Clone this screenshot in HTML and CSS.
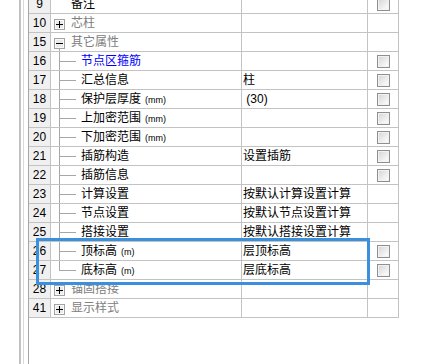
FILE: index.html
```html
<!DOCTYPE html>
<html lang="zh-CN">
<head>
    <meta charset="UTF-8">
    <title>属性</title>
    <link rel="stylesheet" href="styles.css">
</head>
<body>
    <div class="frame">
        <div class="strip"><div class="strip-lines"></div></div>

        <div class="grid">
            <!-- 顶层 -->
            <div class="row">
                <div class="num">9</div>
                <div class="name top"><span class="label">备注</span></div>
                <div class="val"></div>
                <div class="chk"><span class="box"></span></div>
            </div>
            <div class="row">
                <div class="num">10</div>
                <div class="name"><span class="node"><svg width="11" height="11" viewBox="0 0 11 11"><rect x="0.5" y="0.5" width="10" height="10" fill="#ebebeb" stroke="#a3a3a3"/><rect x="1.5" y="1.5" width="8" height="8" fill="none" stroke="#fafafa"/><path d="M2 5.5h7M5.5 2v7" stroke="#000"/></svg></span><span class="label group">芯柱</span></div>
                <div class="val"></div>
                <div class="chk"></div>
            </div>
            <div class="row">
                <div class="num">15</div>
                <div class="name"><span class="node open"><svg width="11" height="11" viewBox="0 0 11 11"><rect x="0.5" y="0.5" width="10" height="10" fill="#ebebeb" stroke="#a3a3a3"/><rect x="1.5" y="1.5" width="8" height="8" fill="none" stroke="#fafafa"/><path d="M2 5.5h7" stroke="#000"/></svg></span><span class="label group">其它属性</span></div>
                <div class="val"></div>
                <div class="chk"></div>
            </div>

            <!-- 其它属性 子项 -->
            <div class="row">
                <div class="num">16</div>
                <div class="name"><span class="twig"></span><span class="label blue">节点区箍筋</span></div>
                <div class="val"></div>
                <div class="chk"><span class="box"></span></div>
            </div>
            <div class="row">
                <div class="num">17</div>
                <div class="name"><span class="twig"></span><span class="label">汇总信息</span></div>
                <div class="val">柱</div>
                <div class="chk"><span class="box"></span></div>
            </div>
            <div class="row">
                <div class="num">18</div>
                <div class="name"><span class="twig"></span><span class="label">保护层厚度<span class="unit">(mm)</span></span></div>
                <div class="val">&nbsp;(30)</div>
                <div class="chk"><span class="box"></span></div>
            </div>
            <div class="row">
                <div class="num">19</div>
                <div class="name"><span class="twig"></span><span class="label">上加密范围<span class="unit">(mm)</span></span></div>
                <div class="val"></div>
                <div class="chk"><span class="box"></span></div>
            </div>
            <div class="row">
                <div class="num">20</div>
                <div class="name"><span class="twig"></span><span class="label">下加密范围<span class="unit">(mm)</span></span></div>
                <div class="val"></div>
                <div class="chk"><span class="box"></span></div>
            </div>
            <div class="row">
                <div class="num">21</div>
                <div class="name"><span class="twig"></span><span class="label">插筋构造</span></div>
                <div class="val">设置插筋</div>
                <div class="chk"><span class="box"></span></div>
            </div>
            <div class="row">
                <div class="num">22</div>
                <div class="name"><span class="twig"></span><span class="label">插筋信息</span></div>
                <div class="val"></div>
                <div class="chk"><span class="box"></span></div>
            </div>
            <div class="row">
                <div class="num">23</div>
                <div class="name"><span class="twig"></span><span class="label">计算设置</span></div>
                <div class="val">按默认计算设置计算</div>
                <div class="chk"></div>
            </div>
            <div class="row">
                <div class="num">24</div>
                <div class="name"><span class="twig"></span><span class="label">节点设置</span></div>
                <div class="val">按默认节点设置计算</div>
                <div class="chk"></div>
            </div>
            <div class="row">
                <div class="num">25</div>
                <div class="name"><span class="twig"></span><span class="label">搭接设置</span></div>
                <div class="val">按默认搭接设置计算</div>
                <div class="chk"></div>
            </div>
            <div class="row">
                <div class="num">26</div>
                <div class="name"><span class="twig"></span><span class="label">顶标高<span class="unit">(m)</span></span></div>
                <div class="val">层顶标高</div>
                <div class="chk"><span class="box"></span></div>
            </div>
            <div class="row">
                <div class="num">27</div>
                <div class="name"><span class="twig last"></span><span class="label">底标高<span class="unit">(m)</span></span></div>
                <div class="val">层底标高</div>
                <div class="chk"><span class="box"></span></div>
            </div>

            <!-- 折叠的分组 -->
            <div class="row">
                <div class="num">28</div>
                <div class="name"><span class="node"><svg width="11" height="11" viewBox="0 0 11 11"><rect x="0.5" y="0.5" width="10" height="10" fill="#ebebeb" stroke="#a3a3a3"/><rect x="1.5" y="1.5" width="8" height="8" fill="none" stroke="#fafafa"/><path d="M2 5.5h7M5.5 2v7" stroke="#000"/></svg></span><span class="label group">锚固搭接</span></div>
                <div class="val"></div>
                <div class="chk"></div>
            </div>
            <div class="row">
                <div class="num">41</div>
                <div class="name"><span class="node"><svg width="11" height="11" viewBox="0 0 11 11"><rect x="0.5" y="0.5" width="10" height="10" fill="#ebebeb" stroke="#a3a3a3"/><rect x="1.5" y="1.5" width="8" height="8" fill="none" stroke="#fafafa"/><path d="M2 5.5h7M5.5 2v7" stroke="#000"/></svg></span><span class="label group">显示样式</span></div>
                <div class="val"></div>
                <div class="chk"></div>
            </div>
        </div>

        <!-- 选中框 -->
        <div class="highlight"></div>
    </div>
</body>
</html>
```

FILE: styles.css
```css
body {
    margin: 0;
    background: #fff;
    font-family: "Liberation Sans", "Noto Sans CJK SC", sans-serif;
    font-size: 12px;
    color: #000;
}

.frame {
    position: relative;
    display: flex;
    height: 364px;
    overflow: hidden;
}

/* 左侧窗口边框 */
.strip {
    flex: none;
    width: 29px;
    display: flex;
}
.strip-lines {
    margin-left: 19px;
    width: 10px;
    box-sizing: border-box;
    border-left: 2px solid #c2c2c2;
    border-right: 1px solid #a6a6a6;
    background: linear-gradient(#dadada, #dadada) no-repeat 2px 0 / 1px 100%;
}

/* 属性表格 */
.grid {
    flex: none;
    width: 370px;
    margin-top: -5px;
    align-self: flex-start;
}
.row {
    display: grid;
    grid-template-columns: 22px 191px 126px 31px;
    height: 19px;
    box-sizing: border-box;
    border-bottom: 1px solid #c3c3c3;
}
.row > div {
    box-sizing: border-box;
    border-right: 1px solid #c3c3c3;
    line-height: 18px;
    white-space: nowrap;
    overflow: hidden;
}
.num {
    background: #f0f0f0;
    text-align: center;
}
.name {
    display: flex;
    align-items: stretch;
    padding-left: 3px;
}
.name.top {
    padding-left: 20px;
}
.val {
    padding-left: 1px;
}
.chk {
    display: flex;
    align-items: center;
    justify-content: center;
}

.label {
    display: block;
}
.group {
    color: #808080;
    margin-left: 6px;
}
.blue {
    color: #0000ff;
}
.unit {
    font-size: 9px;
    margin-left: 4px;
}

/* 树形节点 */
.node {
    width: 11px;
    display: flex;
    align-items: center;
}
.node svg {
    display: block;
    margin-top: 2px;
}
.node.open {
    background: linear-gradient(#a7a7a7, #a7a7a7) no-repeat 5px 100% / 1px 50%;
}
.twig {
    width: 17px;
    margin-left: 5px;
    box-sizing: border-box;
    border-left: 1px solid #a7a7a7;
    background: linear-gradient(#a7a7a7, #a7a7a7) no-repeat 0 9px / 100% 1px;
}
.twig.last {
    align-self: flex-start;
    height: 10px;
}
.twig + .label {
    margin-left: 5px;
}

/* 复选框 */
.box {
    width: 13px;
    height: 13px;
    box-sizing: border-box;
    border: 1px solid #8f8f8f;
    background: linear-gradient(135deg, #d4d4d4, #f4f4f4 70%, #fff);
    box-shadow: inset 0 0 0 1px #f2f2f2;
}

.highlight {
    position: absolute;
    left: 36px;
    top: 238px;
    width: 334px;
    height: 47px;
    box-sizing: border-box;
    border: 3px solid #3a90dc;
}
```
